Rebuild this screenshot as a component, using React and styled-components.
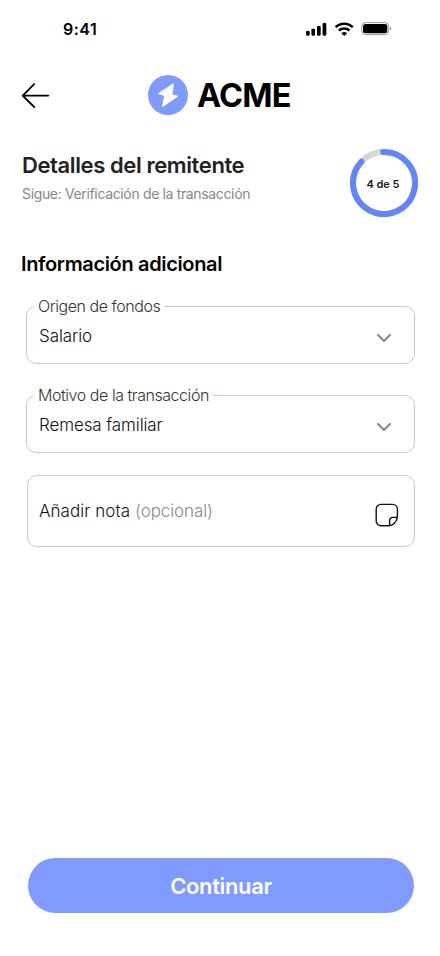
import React from "react";
import styled, { createGlobalStyle } from "styled-components";

const GlobalStyle = createGlobalStyle`
  *, *::before, *::after { box-sizing: border-box; }
  body { margin: 0; background: #fff; }
  button, h1, h2, p, fieldset { margin: 0; padding: 0; border: 0; font: inherit; }
`;

const Screen = styled.main`
  display: flex;
  flex-direction: column;
  width: 440px;
  height: 956px;
  background: #fff;
  color: #000;
  font-family: Inter, "Liberation Sans", sans-serif;
  overflow: hidden;
  white-space: nowrap;
`;

const StatusBar = styled.div`
  display: flex;
  align-items: center;
  justify-content: space-between;
  height: 58px;
  padding: 0 48px 0 63px;
`;

const Time = styled.span`
  font-size: 16px;
  line-height: 20px;
  font-weight: 600;
  letter-spacing: 0.5px;
`;

const TopBar = styled.header`
  display: flex;
  align-items: center;
  height: 74px;
  padding-left: 21px;
`;

const IconButton = styled.button`
  display: flex;
  margin-top: 2px;
  background: none;
`;

const Brand = styled.div`
  display: flex;
  align-items: center;
  gap: 9px;
  margin-left: 97px;
`;

const BrandName = styled.span`
  padding-top: 2px;
  font-size: 32.5px;
  line-height: 40px;
  font-weight: 700;
  letter-spacing: -0.8px;
`;

const StepHeader = styled.section`
  display: flex;
  justify-content: space-between;
  height: 102px;
  padding: 17px 22px 0;
`;

const StepTitle = styled.h1`
  margin-top: 2px;
  font-size: 22px;
  line-height: 28px;
  font-weight: 600;
  color: #222;
  letter-spacing: -0.4px;
`;

const StepHint = styled.p`
  margin-top: 5px;
  font-size: 14px;
  line-height: 20px;
  color: #888;
  letter-spacing: -0.35px;
`;

const Progress = styled.div`
  display: grid;
  width: 68px;
  height: 68px;
  place-items: center;
  > * { grid-area: 1 / 1; }
`;

const ProgressText = styled.span`
  margin: 2px 2px 0 0;
  font-size: 11px;
  line-height: 14px;
  font-weight: 600;
  color: #222;
  letter-spacing: -0.05px;
`;

const SectionTitle = styled.h2`
  height: 61px;
  padding: 16px 0 0 21px;
  font-size: 20px;
  line-height: 28px;
  font-weight: 600;
  letter-spacing: -0.35px;
`;

const Form = styled.form`
  display: flex;
  flex-direction: column;
  flex: 1;
  padding: 1px 25px 43px 26px;
`;

const Field = styled.fieldset`
  height: 68px;
  margin-bottom: 21px;
  min-width: 0;
  border: 1px solid #c9c9c9;
  border-radius: 10px;
  padding: 0 22px 0 7px;
`;

const Legend = styled.legend`
  height: 20px;
  padding: 0 4px;
  font-size: 16px;
  line-height: 20px;
  font-weight: 300;
  color: #333;
  letter-spacing: -0.45px;
`;

const FieldRow = styled.div`
  display: flex;
  align-items: center;
  justify-content: space-between;
  height: 40px;
  padding-left: 5px;

  svg { margin-top: 3px; }
`;

const Value = styled.span`
  font-size: 17px;
  line-height: 24px;
  font-weight: 350;
  color: #111;
  letter-spacing: -0.1px;
`;

const Note = styled.div`
  display: flex;
  align-items: center;
  justify-content: space-between;
  height: 72px;
  margin: 1px 0 0 1px;
  padding: 0 15px 0 11px;
  border: 1px solid #c9c9c9;
  border-radius: 10px;

  svg { margin-top: 8px; }
`;

const NoteLabel = styled.span`
  display: flex;
  gap: 5px;
`;

const NoteText = styled(Value)`
  letter-spacing: 0.05px;
`;

const Optional = styled(Value)`
  color: #888;
  font-weight: 300;
`;

const Continue = styled.button`
  height: 55px;
  margin: auto 1px 0 2px;
  border-radius: 28px;
  background: #809bff;
  color: #fff;
  font-size: 22px;
  line-height: 28px;
  font-weight: 600;
  letter-spacing: -0.35px;
`;

const StatusIcons = () => (
  <svg width="87" height="16" viewBox="305 21 87 16">
    <rect x="306" y="31" width="3.7" height="4.7" rx="1.1" />
    <rect x="311.4" y="28.8" width="3.7" height="6.9" rx="1.1" />
    <rect x="317" y="26" width="3.7" height="9.7" rx="1.1" />
    <rect x="322.6" y="23" width="3.7" height="12.7" rx="1.1" />
    <g fill="none" stroke="#000" strokeWidth="2.5">
      <path d="M335.6 27.2a12.4 12.4 0 0 1 17.2 0" />
      <path d="M338.9 30.5a7.8 7.8 0 0 1 10.6 0" />
    </g>
    <path d="M341.3 33.2a4.5 4.5 0 0 1 5.8 0L344.2 36Z" />
    <rect x="361.7" y="22.6" width="27" height="12" rx="3.8" fill="none" stroke="#999" />
    <rect x="363" y="24" width="24.3" height="9.3" rx="2.5" />
    <path d="M390 26.6v4a2.2 2.2 0 0 0 0-4Z" fill="#999" />
  </svg>
);

const BackArrow = () => (
  <svg width="30" height="28" viewBox="21 82 30 28" fill="none" stroke="#000" strokeWidth="1.9" strokeLinecap="round" strokeLinejoin="round">
    <path d="M48.2 95.6H22.7M34.2 84.2 22.7 95.6 34.2 107" />
  </svg>
);

const Logo = () => (
  <svg width="40" height="40" viewBox="148 75 40 40">
    <circle cx="168" cy="95" r="20" fill="#809bff" />
    <path
      d="M173.3 83.9 158.9 93.4 166.2 95.9 164.4 97 162.7 106.2 177.2 96.2 171.4 95.2 172 94Z"
      fill="#fff"
      stroke="#fff"
      strokeWidth="1.2"
      strokeLinejoin="round"
    />
  </svg>
);

const Ring = () => (
  <svg width="68" height="68" fill="none" strokeWidth="6">
    <circle cx="34" cy="34" r="31" stroke="#d6d6d6" />
    <path d="M33.2 3A31 31 0 1 1 11.4 12.8" stroke="#6284ff" strokeLinecap="round" />
  </svg>
);

const Chevron = () => (
  <svg width="16" height="12" fill="none" stroke="#888" strokeWidth="2" strokeLinecap="round" strokeLinejoin="round">
    <path d="M2 3 8 9 14 3" />
  </svg>
);

const NoteIcon = () => (
  <svg width="24" height="24" fill="none" stroke="#111" strokeWidth="1.4" strokeLinejoin="round">
    <path d="M13.8 22.7H6A4.8 4.8 0 0 1 1.2 17.9V6.2A4.8 4.8 0 0 1 6 1.4H17.6A4.8 4.8 0 0 1 22.4 6.2V13.8Q22.4 17.4 19.4 20.2 16.8 22.7 13.8 22.7 15 21.4 14.6 19V17.6A3.2 3.2 0 0 1 17.8 14.4H19.4Q21.6 14.6 22.4 13.8" />
  </svg>
);

const SelectField = ({ label, value }) => (
  <Field>
    <Legend>{label}</Legend>
    <FieldRow>
      <Value>{value}</Value>
      <Chevron />
    </FieldRow>
  </Field>
);

export default function App() {
  return (
    <Screen>
      <GlobalStyle />
      <StatusBar>
        <Time>9:41</Time>
        <StatusIcons />
      </StatusBar>
      <TopBar>
        <IconButton aria-label="Volver">
          <BackArrow />
        </IconButton>
        <Brand>
          <Logo />
          <BrandName>ACME</BrandName>
        </Brand>
      </TopBar>
      <StepHeader>
        <div>
          <StepTitle>Detalles del remitente</StepTitle>
          <StepHint>Sigue: Verificación de la transacción</StepHint>
        </div>
        <Progress>
          <Ring />
          <ProgressText>4 de 5</ProgressText>
        </Progress>
      </StepHeader>
      <SectionTitle>Información adicional</SectionTitle>
      <Form>
        <SelectField label="Origen de fondos" value="Salario" />
        <SelectField label="Motivo de la transacción" value="Remesa familiar" />
        <Note>
          <NoteLabel>
            <NoteText>Añadir nota</NoteText>
            <Optional>(opcional)</Optional>
          </NoteLabel>
          <NoteIcon />
        </Note>
        <Continue type="button">Continuar</Continue>
      </Form>
    </Screen>
  );
}
